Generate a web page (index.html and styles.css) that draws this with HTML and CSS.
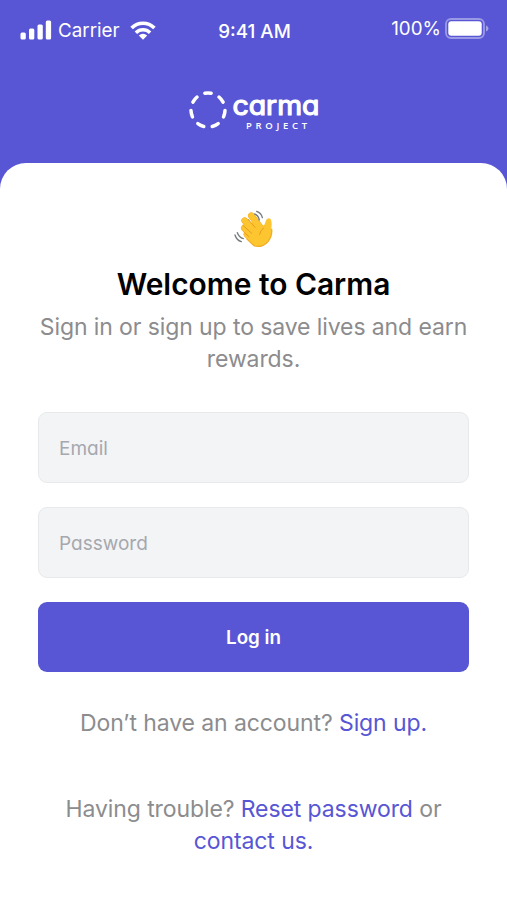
FILE: index.html
```html
<!DOCTYPE html>
<html lang="en">
<head>
<meta charset="UTF-8">
<meta name="viewport" content="width=device-width, initial-scale=1.0">
<title>Carma Project</title>
<link rel="stylesheet" href="styles.css">
</head>
<body>

<header>
    <div class="status-bar">
        <div class="carrier">
            <svg width="32" height="20" viewBox="0 0 32 20" fill="#fff">
                <rect x="0.5" y="12.5" width="5.3" height="7" rx="1.5"/>
                <rect x="9" y="8.5" width="5.3" height="11" rx="1.5"/>
                <rect x="17.5" y="4.5" width="5.3" height="15" rx="1.5"/>
                <rect x="25.8" y="0.5" width="5.3" height="19" rx="1.5"/>
            </svg>
            <span>Carrier</span>
            <svg class="wifi" width="26" height="19" viewBox="0 0 26 19" fill="none" stroke="#fff" stroke-width="3.6">
                <path d="M1.6 7.1C8 .7 18 .7 24.4 7.1"/>
                <path d="M5.9 11.7C10 7.8 16 7.8 20.1 11.7"/>
                <path d="M13 18.7L8.8 14.5Q13 11 17.2 14.5Z" fill="#fff" stroke="none"/>
            </svg>
        </div>
        <span class="time">9:41 AM</span>
        <div class="battery">
            <span>100%</span>
            <svg width="44" height="21" viewBox="0 0 44 21">
                <rect x="1" y="1" width="38" height="19" rx="5" fill="none" stroke="#fff" stroke-opacity="0.4" stroke-width="1.8"/>
                <rect x="3.3" y="3.3" width="33.4" height="14.4" rx="3" fill="#fff"/>
                <path d="M41 7.5Q43.5 8.5 43.5 10.5T41 13.5Z" fill="#fff" fill-opacity="0.45"/>
            </svg>
        </div>
    </div>
    <svg class="logo" width="132" height="42" viewBox="0 0 132 42">
        <circle class="ring" cx="20" cy="20" r="17" pathLength="70"/>
        <text class="logo-name" x="44.5" y="24.5" textLength="87" lengthAdjust="spacingAndGlyphs">carma</text>
        <text class="logo-sub" x="58" y="39" textLength="61">PROJECT</text>
    </svg>
</header>

<main>
    <svg class="wave" width="70" height="60" viewBox="0 0 210 180">
        <g class="hand-edge">
            <path d="M97 47L128 88M77 62L114 105M76 84L110 117M84 103L112 128"/>
        </g>
        <path d="M100 66L128 75Q136 80 139 67Q144 50 154 56Q160 64 157 84Q161 107 147 125Q129 147 105 137L77 110L80 82Z" fill="#fdc52f"/>
        <path class="hand-shade" d="M158 88Q160 108 147 125Q129 145 105 137L84 117"/>
        <g class="hand-finger">
            <path d="M97 47L128 88M77 62L114 105M76 84L110 117M84 103L112 128"/>
        </g>
        <path class="hand-crease" d="M88 58L108 82M72 76L98 100M75 97L90 110M134 84Q124 90 122 103"/>
        <g class="motion">
            <path d="M107 42Q118 46 121 60M113 34Q127 39 130 53"/>
            <path d="M55 98Q60 112 73 116M48 105Q53 121 67 125"/>
        </g>
    </svg>
    <h1>Welcome to Carma</h1>
    <p class="intro">Sign in or sign up to save lives and earn<br>rewards.</p>

    <form>
        <input type="email" placeholder="Email">
        <input type="password" placeholder="Password">
        <button type="button">Log in</button>
    </form>

    <p class="signup">Don’t have an account? <a href="#">Sign up.</a></p>
    <p class="help">Having trouble? <a href="#">Reset password</a> or<br><a href="#">contact us.</a></p>
</main>

</body>
</html>
```
FILE: styles.css
```css
:root {
    --primary: #5856d4;
    --muted: #8c8c8e;
    --field: #f3f4f6;
    --border: #e7e9ea;
}
* {
    box-sizing: border-box;
}
body {
    background: var(--primary);
    font-family: Inter, sans-serif;
    margin: 0;
    min-height: 900px;
    display: flex;
    flex-direction: column;
}
header {
    height: 163px;
    color: #fff;
    display: flex;
    flex-direction: column;
    align-items: center;
}
.status-bar {
    width: 100%;
    height: 60px;
    padding: 0 18px 0 20px;
    display: grid;
    grid-template-columns: 1fr auto 1fr;
    align-items: center;
    font-size: 18.8px;
}
.carrier, .battery {
    display: flex;
    align-items: center;
}
.carrier {
    gap: 6px;
}
.wifi {
    margin-left: 4px;
}
.time {
    font-weight: 500;
    padding-top: 2px;
}
.battery {
    justify-content: flex-end;
    gap: 4px;
    padding-bottom: 3px;
}
.logo {
    margin-top: 30px;
    overflow: visible;
}
.ring {
    fill: none;
    stroke: #fff;
    stroke-width: 3.5;
    stroke-linecap: round;
    stroke-dasharray: 4.3 5.7;
    stroke-dashoffset: -0.35;
}
.logo-name {
    fill: #fff;
    stroke: #fff;
    stroke-width: 1.2;
    stroke-linejoin: round;
    font-size: 27px;
    font-weight: 400;
    font-feature-settings: "cv11";
}
.logo-sub {
    fill: #fff;
    font-family: "Open Sans", sans-serif;
    font-size: 9.5px;
    font-weight: 600;
}
main {
    flex: 1;
    background: #fff;
    border-radius: 26px 26px 0 0;
    padding: 37px 38px 0;
    text-align: center;
    color: var(--muted);
}
.wave {
    display: block;
    margin: 0 auto;
}
.hand-edge, .hand-finger, .hand-crease, .hand-shade, .motion {
    fill: none;
    stroke-linecap: round;
}
.hand-edge {
    stroke: #eba52a;
    stroke-width: 20;
}
.hand-finger {
    stroke: #fdc52f;
    stroke-width: 18;
}
.hand-crease {
    stroke: #e79c21;
    stroke-width: 3;
}
.hand-shade {
    stroke: #f2ac26;
    stroke-width: 4;
}
.motion {
    stroke: #747b7e;
    stroke-width: 4;
}
h1 {
    margin: 4px 0 0;
    color: #000;
    font-size: 29.9px;
    font-weight: 600;
    line-height: 40px;
}
p {
    margin: 0 -20px;
    font-size: 23px;
    line-height: 32px;
    letter-spacing: -0.1px;
}
.intro {
    margin-top: 7px;
}
form {
    margin-top: 37px;
    display: flex;
    flex-direction: column;
    gap: 24px;
}
input {
    width: 100%;
    height: 71px;
    padding: 2px 20px 0;
    border: 1.5px solid var(--border);
    border-radius: 9px;
    background: var(--field);
    font: 400 19px Inter, sans-serif;
    font-feature-settings: "cv11";
}
input::placeholder {
    color: #a5a8ae;
}
button {
    height: 70px;
    border: none;
    border-radius: 9px;
    background: var(--primary);
    color: #fff;
    font: 600 18.8px Inter, sans-serif;
    cursor: pointer;
}
a {
    color: var(--primary);
    text-decoration: none;
}
.signup {
    margin-top: 35px;
}
.help {
    margin-top: 54px;
}
```
